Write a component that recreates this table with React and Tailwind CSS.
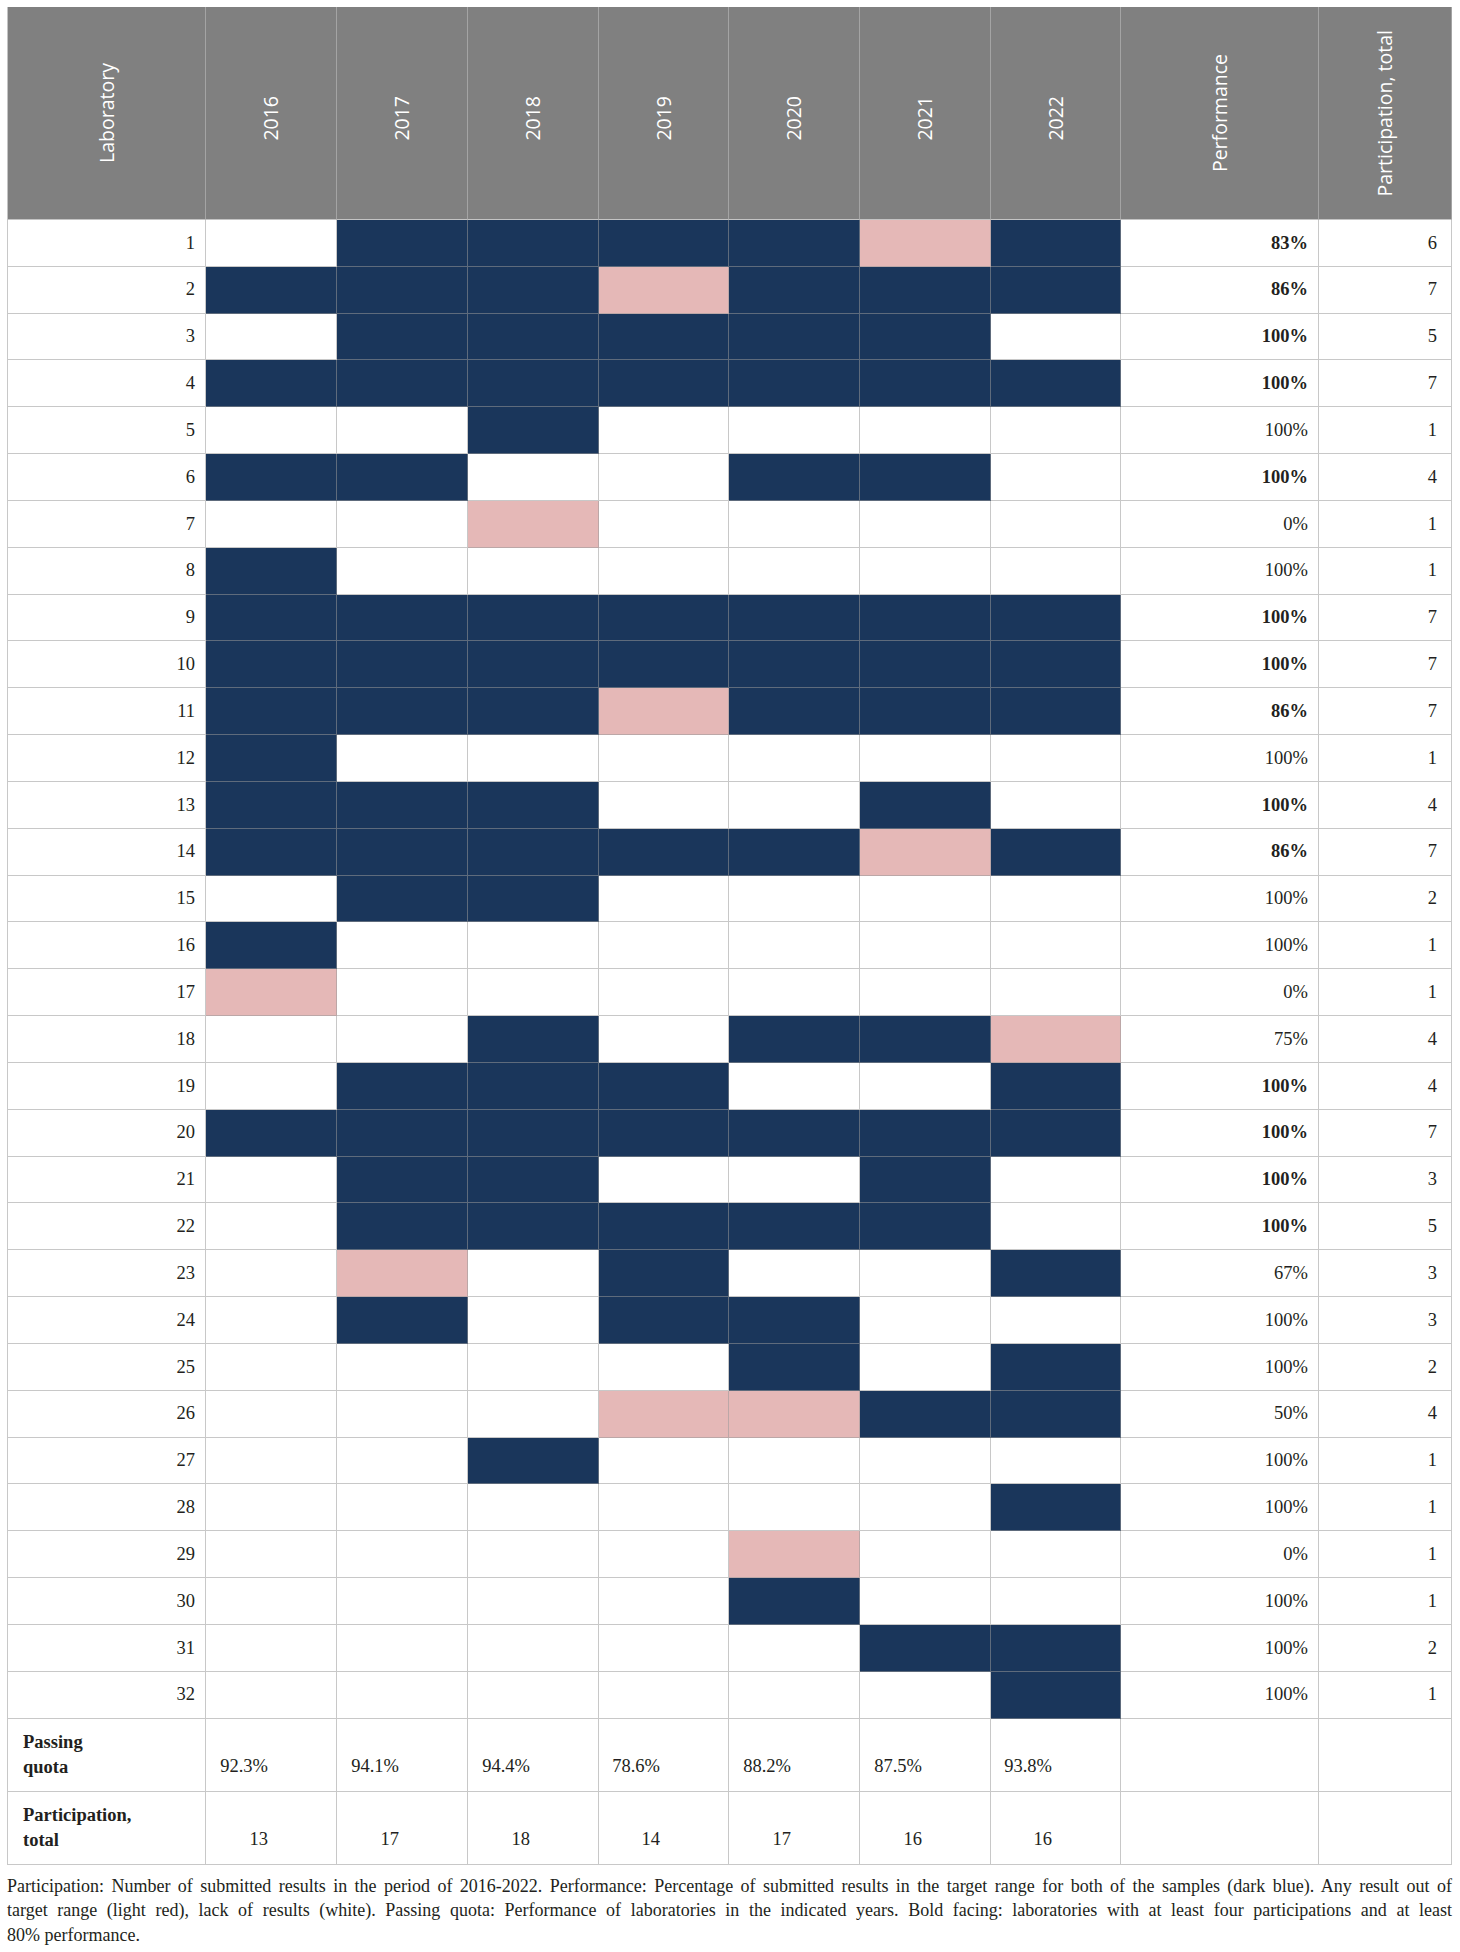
const rows = [
  [1, 'WBBBBPB', '83%', 6, true],
  [2, 'BBBPBBB', '86%', 7, true],
  [3, 'WBBBBBW', '100%', 5, true],
  [4, 'BBBBBBB', '100%', 7, true],
  [5, 'WWBWWWW', '100%', 1, false],
  [6, 'BBWWBBW', '100%', 4, true],
  [7, 'WWPWWWW', '0%', 1, false],
  [8, 'BWWWWWW', '100%', 1, false],
  [9, 'BBBBBBB', '100%', 7, true],
  [10, 'BBBBBBB', '100%', 7, true],
  [11, 'BBBPBBB', '86%', 7, true],
  [12, 'BWWWWWW', '100%', 1, false],
  [13, 'BBBWWBW', '100%', 4, true],
  [14, 'BBBBBPB', '86%', 7, true],
  [15, 'WBBWWWW', '100%', 2, false],
  [16, 'BWWWWWW', '100%', 1, false],
  [17, 'PWWWWWW', '0%', 1, false],
  [18, 'WWBWBBP', '75%', 4, false],
  [19, 'WBBBWWB', '100%', 4, true],
  [20, 'BBBBBBB', '100%', 7, true],
  [21, 'WBBWWBW', '100%', 3, true],
  [22, 'WBBBBBW', '100%', 5, true],
  [23, 'WPWBWWB', '67%', 3, false],
  [24, 'WBWBBWW', '100%', 3, false],
  [25, 'WWWWBWB', '100%', 2, false],
  [26, 'WWWPPBB', '50%', 4, false],
  [27, 'WWBWWWW', '100%', 1, false],
  [28, 'WWWWWWB', '100%', 1, false],
  [29, 'WWWWPWW', '0%', 1, false],
  [30, 'WWWWBWW', '100%', 1, false],
  [31, 'WWWWWBB', '100%', 2, false],
  [32, 'WWWWWWB', '100%', 1, false],
]

const years = ['2016', '2017', '2018', '2019', '2020', '2021', '2022']
const quota = ['92.3%', '94.1%', '94.4%', '78.6%', '88.2%', '87.5%', '93.8%']
const totals = ['13', '17', '18', '14', '17', '16', '16']

const fill = {
  B: 'bg-[#1a365b]',
  P: 'bg-[#e5b8b7]',
  W: 'bg-white',
}

function HeadCell({ label, first, year }) {
  return (
    <th className={`p-0 bg-[#808080] border-r border-b border-r-[#a4a4a4] border-b-[#c4c4c4] font-normal ${first ? 'border-l border-l-[#c4c4c4]' : ''}`}>
      <div className={`h-[212px] flex items-center justify-center ${year ? 'pt-[11px]' : ''}`}>
        <span className="[writing-mode:vertical-rl] rotate-180 [font-family:'Open_Sans',sans-serif] text-[19.5px] leading-none text-white whitespace-nowrap">
          {label}
        </span>
      </div>
    </th>
  )
}

const cell = 'border-r border-b border-[#9999998a] p-0'

export default function App() {
  return (
    <div className="w-[1460px] min-h-[1952px] bg-white px-[7px] pt-[7px] [font-family:'Liberation_Serif',serif] text-[#231f20]">
      <table className="w-[1445px] table-fixed border-separate border-spacing-0">
        <colgroup>
          <col className="w-[199px]" />
          <col className="w-[131px]" />
          <col className="w-[131px]" />
          <col className="w-[131px]" />
          <col className="w-[130px]" />
          <col className="w-[131px]" />
          <col className="w-[131px]" />
          <col className="w-[130px]" />
          <col className="w-[198px]" />
          <col className="w-[133px]" />
        </colgroup>
        <thead>
          <tr>
            <HeadCell label="Laboratory" first />
            {years.map(y => <HeadCell key={y} label={y} year />)}
            <HeadCell label="Performance" />
            <HeadCell label="Participation, total" />
          </tr>
        </thead>
        <tbody className="text-[18.5px] leading-none">
          {rows.map(([lab, marks, perf, total, bold]) => (
            <tr key={lab} className="h-[46.84px]">
              <td className={`${cell} border-l text-right pr-[10px] align-middle`}>{lab}</td>
              {marks.split('').map((m, i) => (
                <td key={i} className={`${cell} ${fill[m]}`} />
              ))}
              <td className={`${cell} text-right pr-[10px] align-middle ${bold ? 'font-bold' : ''}`}>{perf}</td>
              <td className={`${cell} text-right pr-[14px] align-middle`}>{total}</td>
            </tr>
          ))}
          <tr className="h-[73px]">
            <td className={`${cell} border-l pl-[15px] font-bold leading-[25px] align-middle`}>
              Passing<br />quota
            </td>
            {quota.map((q, i) => (
              <td key={i} className={`${cell} text-right pr-[68px] pb-[12px] leading-[25px] align-bottom`}>{q}</td>
            ))}
            <td className={cell} />
            <td className={cell} />
          </tr>
          <tr className="h-[73px]">
            <td className={`${cell} border-l pl-[15px] font-bold leading-[25px] align-middle`}>
              Participation,<br />total
            </td>
            {totals.map((t, i) => (
              <td key={i} className={`${cell} text-right pr-[68px] pb-[12px] leading-[25px] align-bottom`}>{t}</td>
            ))}
            <td className={cell} />
            <td className={cell} />
          </tr>
        </tbody>
      </table>

      <div className="w-[1445px] mt-[9px] text-[18px] leading-[24.5px] text-[#231f20]">
        <p className="text-justify [text-align-last:justify] whitespace-nowrap">
          Participation: Number of submitted results in the period of 2016-2022. Performance: Percentage of submitted results in the target range for both of the samples (dark blue). Any result out of
        </p>
        <p className="text-justify [text-align-last:justify]">
          target range (light red), lack of results (white). Passing quota: Performance of laboratories in the indicated years. Bold facing: laboratories with at least four participations and at least
        </p>
        <p>80% performance.</p>
      </div>
    </div>
  )
}
